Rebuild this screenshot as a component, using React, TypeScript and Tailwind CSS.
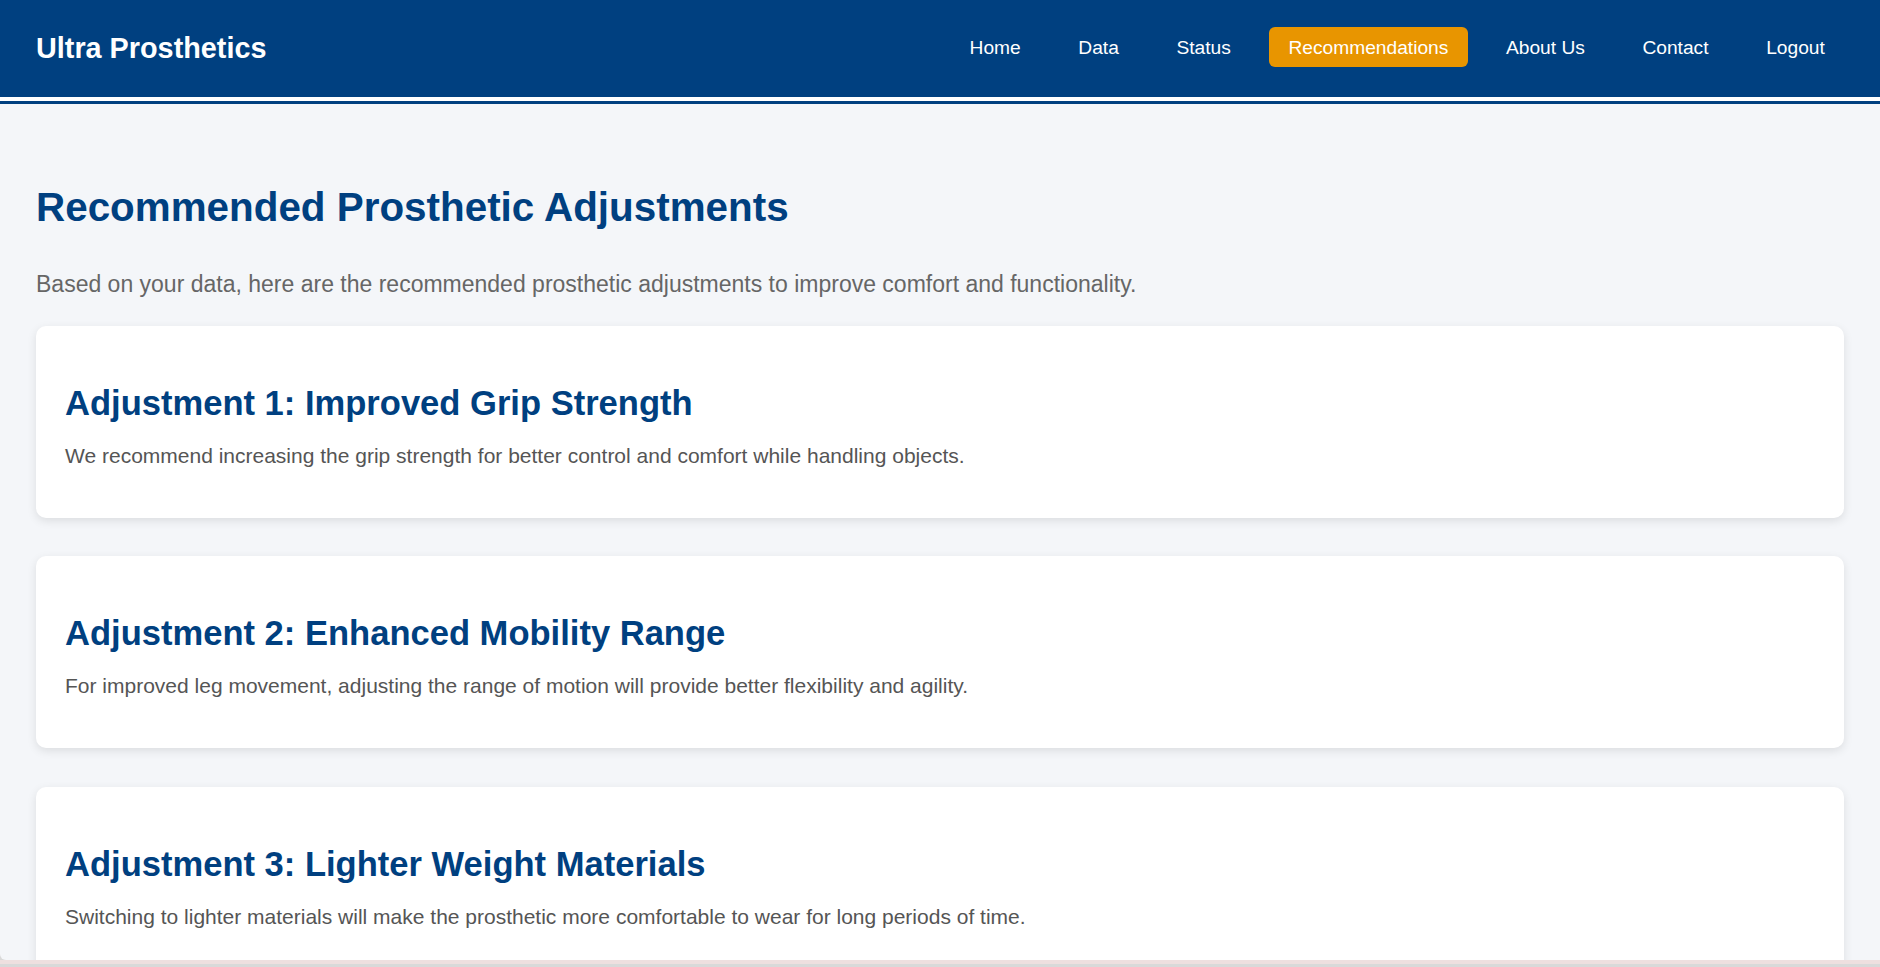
import React from 'react';

const navItems = ['Home', 'Data', 'Status', 'Recommendations', 'About Us', 'Contact', 'Logout'];

const adjustments = [
  {
    title: 'Adjustment 1: Improved Grip Strength',
    text: 'We recommend increasing the grip strength for better control and comfort while handling objects.',
  },
  {
    title: 'Adjustment 2: Enhanced Mobility Range',
    text: 'For improved leg movement, adjusting the range of motion will provide better flexibility and agility.',
  },
  {
    title: 'Adjustment 3: Lighter Weight Materials',
    text: 'Switching to lighter materials will make the prosthetic more comfortable to wear for long periods of time.',
  },
];

export default function App() {
  return (
    <div className="h-[967px] flex flex-col bg-[#d9d9d9] font-['Liberation_Sans',Arial,sans-serif]">
      <div className="flex-1 overflow-hidden bg-[#f4f6f9] rounded-bl-[6px]">
        <header className="bg-[#004080] h-[97px] px-[36px] pt-[27px] flex items-start justify-between">
          <h1 className="mt-[5px] text-white font-bold text-[28.8px] leading-[33px]">Ultra Prosthetics</h1>
          <nav className="flex gap-[19.2px]">
            {navItems.map((item) => (
              <a
                key={item}
                href="#"
                className={
                  item === 'Recommendations'
                    ? 'h-[40px] px-[19.2px] pt-[9.5px] rounded-[6px] text-white text-[19.2px] leading-[22px] bg-[#e89500]'
                    : 'h-[40px] px-[19.2px] pt-[9.5px] rounded-[6px] text-white text-[19.2px] leading-[22px]'
                }
              >
                {item}
              </a>
            ))}
          </nav>
        </header>
        <div className="h-[4px] bg-white" />
        <div className="h-[3px] bg-[#004080]" />

        <main className="px-[36px] pt-[80px]">
          <h2 className="text-[#004080] font-bold text-[40.4px] leading-[46px]">Recommended Prosthetic Adjustments</h2>
          <p className="mt-[41px] text-[#666] text-[23px] leading-[26px]">
            Based on your data, here are the recommended prosthetic adjustments to improve comfort and functionality.
          </p>

          <div className="mt-[29px] flex flex-col gap-[38.4px]">
            {adjustments.map((a) => (
              <section
                key={a.title}
                className="bg-white rounded-[10px] shadow-[0_3px_10px_rgba(0,0,0,0.1)] px-[29px] pt-[57px] pb-[50px]"
              >
                <h3 className="text-[#004080] font-bold text-[34.56px] leading-[40px]">{a.title}</h3>
                <p className="mt-[21px] text-[#555] text-[21px] leading-[24px]">{a.text}</p>
              </section>
            ))}
          </div>
        </main>
      </div>
      <div className="h-[4px] bg-[#eedfdf]" />
      <div className="h-[3px] bg-[#d9d9d9]" />
    </div>
  );
}
